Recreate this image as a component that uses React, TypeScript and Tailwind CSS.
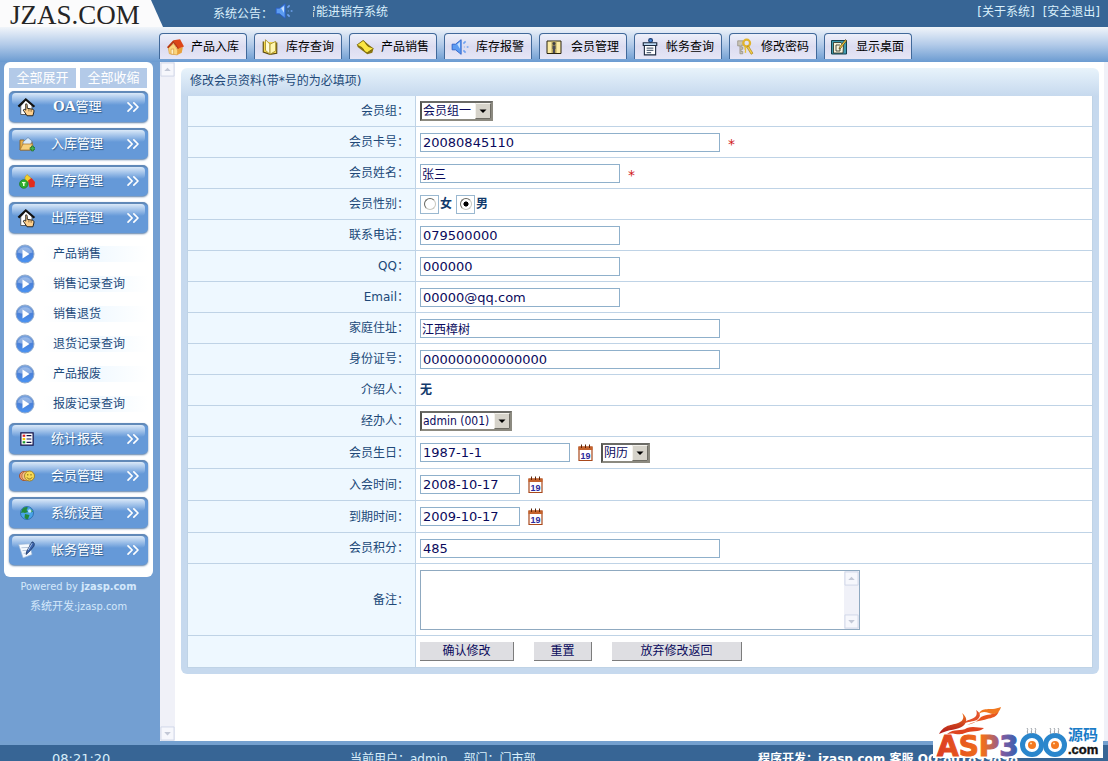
import type { ReactNode } from "react";
import { ChevronsRight } from "lucide-react";

/* ── Icons, all on a 16px grid ── */
function Svg({ children, size = "size-4" }: { children: ReactNode; size?: string }) {
  return (
    <svg viewBox="0 0 16 16" className={`${size} shrink-0`} fill="none" aria-hidden="true">
      {children}
    </svg>
  );
}

const HomeIcon = () => (
  <Svg size="size-[18px]">
    <path d="M2 8.5 7 5l4 7-1 3-7-1z" fill="#fbd67e" stroke="#d99a3a" strokeWidth=".6" />
    <path d="M10 9l5-1-1 5-4 2z" fill="#e9a13b" />
    <path d="M6.5 2 12.500 1l3.500 6.500-5.500 2z" fill="#dd4518" />
    <path d="M6.500 2 .8 8.200l1.400.8L6.600 4.500l4 5.200.8-.6z" fill="#b8380f" />
    <path d="M4.500 14.300V10l2.300-.3v4.900z" fill="#fff2c4" stroke="#d08a2a" strokeWidth=".5" />
  </Svg>
);

const BookIcon = () => (
  <Svg size="size-[18px]">
    <path d="M2 3v9.500l6 2 6-1V4" fill="#f5d84a" stroke="#5b4a10" />
    <path d="M8 14.500V5.500L4 1.500v9.500z" fill="#fffbd8" stroke="#a8912a" strokeWidth=".8" />
    <path d="M8 5.500 13 3v8.500l-5 3z" fill="#fff7b0" stroke="#a8912a" strokeWidth=".8" />
  </Svg>
);

const NoteIcon = () => (
  <Svg size="size-[18px]">
    <path d="M1 6.500 6.500 2l9 7.500-1 3.500-4.500 1.500L1.500 8z" fill="#8a7410" />
    <path d="M1 6 6 2.500c2-.5 2.500 3.500 5 5 1.500.8 3.500.5 4.300 2L10 13c-2.500.2-3-3.200-5-4.700C3.500 7.200 2 7.500 1 6z" fill="#fbe742" stroke="#6b5a08" strokeWidth=".7" />
  </Svg>
);

const SpeakerIcon = () => (
  <Svg size="size-[18px]">
    <path d="M1 5.500h3L9 1.500v13L4 10.500H1z" fill="#5c9cf2" stroke="#2a5fc8" strokeWidth=".8" />
    <path d="M5.500 5.500 8 3.500v6z" fill="#c4e0ff" />
    <path d="m11 5 2-2M11.500 8H12m2 0h1.500M11 11l2 2" stroke="#6fa2f0" strokeWidth="1.400" />
  </Svg>
);

const MemberIcon = () => (
  <Svg>
    <path d="M1 2h14v12.500H1z" fill="#fbeaa4" stroke="#2b2410" />
    <path d="M5.500 2.500h5V14h-5z" fill="#b5a35c" />
    <circle cx="8" cy="4.500" r="1.500" fill="#3c3c44" />
    <path d="M6.500 6.500h3V10H9v4H7v-4h-.5z" fill="#4a4a54" />
  </Svg>
);

const BillIcon = () => (
  <Svg size="size-[18px]">
    <circle cx="8.500" cy="2.200" r="1.700" fill="#4a8be0" stroke="#173a70" />
    <path d="M3 5.500h10V15H3z" fill="#fff" stroke="#1d2a40" />
    <path d="M2 4.200h12v2.500H2z" fill="#bcd8f2" stroke="#1d2a40" />
    <path d="M5 9h6M5 11h6M5 13h4" stroke="#59687c" strokeWidth=".9" />
  </Svg>
);

const KeyIcon = () => (
  <Svg size="size-[18px]">
    <path d="M1.500 2.500h5v4h-2V8h1.500v2H4.500v2H6v2H3.500V7h-2z" fill="#c9c3b4" stroke="#8e8777" strokeWidth=".6" />
    <circle cx="9.500" cy="4.500" r="3" stroke="#e0b32c" strokeWidth="2" />
    <path d="m11 7 4 6.500-1.500 1L9.500 8z" fill="#f5d043" stroke="#a87d12" strokeWidth=".6" />
    <path d="M9 8v5.500l-1.500-.8.6-1.400-.6-1V8z" fill="#e9c136" />
  </Svg>
);

const DesktopIcon = () => (
  <Svg>
    <path d="M.5 1.500h15v13.500H.5z" fill="#3f9bb0" stroke="#153f4f" />
    <path d="M2.500 3.500 10 3.500l2.500 3-.5 7.500H2.500z" fill="#f7f4dc" stroke="#2a2a1c" strokeWidth=".8" />
    <path d="M9 6H5v6h4V9" stroke="#3b3b30" strokeWidth=".9" />
    <path d="m14.500.5 1 1.500-6 7.500-1.500.5.5-2z" fill="#f2c53c" stroke="#3a2d08" strokeWidth=".6" />
  </Svg>
);

const HouseHandIcon = () => (
  <Svg size="size-5">
    <path d="M3 7v7h9V6L7 2.500z" fill="#fff" stroke="#3a3a3a" strokeWidth=".6" />
    <path d="M.5 7 7 .8l7.500 6.400-1.200 1.200L7 3 1.800 8.300z" fill="#111" />
    <path d="M7 5.500c1.200 0 1.200.6 1.200 1.200V9l4.300.8c1 .3 1.200 1 1 2.200l-.8 3H8l-3-4.500.7-.8 1.300.8z" fill="#ffd08c" stroke="#111" strokeWidth=".7" />
    <path d="M9.500 9.500v2M11.300 9.800v2" stroke="#6b4a1c" strokeWidth=".6" />
  </Svg>
);

const FolderPlusIcon = () => (
  <Svg>
    <path d="M1 4h4l1 1.500h7V14H1z" fill="#e8b04a" stroke="#8a5a18" strokeWidth=".8" />
    <path d="m4 6 5-4.500L13 5l-2 5H4z" fill="#dcebfa" stroke="#5c7fa8" strokeWidth=".7" />
    <path d="m1 14 3-6h10l-3 6z" fill="#f7cf7c" stroke="#a4702a" strokeWidth=".7" />
    <path d="M11 11.500h1.500V10h2v1.500H16v2h-1.500V15h-2v-1.500H11z" fill="#43b04a" stroke="#1d6b26" strokeWidth=".6" />
  </Svg>
);

const BlocksIcon = () => (
  <Svg>
    <path d="M8 1.500 12 5v4H6V4z" fill="#f4d02c" stroke="#b8890c" strokeWidth=".5" />
    <path d="M9 7.500 12.500 5 16 9l-.5 5-5 .5z" fill="#e22b1c" />
    <circle cx="4.800" cy="11" r="4.300" fill="#2fae2f" stroke="#157018" strokeWidth=".6" />
    <path d="M3 9h3.500v1.200H5.500V13H4v-2.800H3z" fill="#eaffd8" />
  </Svg>
);

const ReportIcon = () => (
  <Svg size="size-3.5">
    <path d="M1 1h14v14H1z" fill="#fff" stroke="#12124a" strokeWidth="1.400" />
    <path d="M3 3h3v2.500H3z" fill="#e02020" />
    <path d="M3 6.800h3v2.500H3z" fill="#f2c800" />
    <path d="M3 10.500h3V13H3z" fill="#1a9a2c" />
    <path d="M7.500 4.200H13M7.500 8H13m-5.500 3.800H13" stroke="#12124a" strokeWidth="1.300" />
  </Svg>
);

const FacesIcon = () => (
  <Svg>
    <circle cx="5" cy="8" r="4.500" fill="#f2a078" stroke="#a04a22" strokeWidth=".9" />
    <circle cx="7.500" cy="8" r="4.700" fill="#f5c08a" stroke="#a0602a" strokeWidth=".7" />
    <circle cx="10.500" cy="8" r="5" fill="#f7da54" stroke="#94741a" strokeWidth=".8" />
    <path d="M8.800 6v1.500M12 6v1.500M8 9.500c1 2 4 2 5 0" stroke="#75580e" strokeWidth=".9" />
  </Svg>
);

const GlobeIcon = () => (
  <Svg>
    <circle cx="8" cy="8" r="6.500" fill="#4aa4e8" stroke="#2264a8" strokeWidth=".8" />
    <path d="M3 4.500C5 1.500 8 1.500 9 2.500L7.500 5 9 7l-3 1-2-.5-2 .5zM6 9l4.500 1-1.500 4.200c-2 .3-3.500-1-3.500-2zM11.500 3.500l2.500 3-2 1z" fill="#23883c" />
    <circle cx="10.800" cy="6" r="1.800" fill="#d8f4ff" opacity=".85" />
  </Svg>
);

const PenIcon = () => (
  <Svg size="size-[18px]">
    <path d="m.5 3 9.500-.5L12.500 12l-8 3z" fill="#f6faff" stroke="#9ab4d4" strokeWidth=".6" />
    <path d="m3 6 6-.3M4 8.500l5-.3M5 11l3-.5" stroke="#a4b8d0" strokeWidth=".7" />
    <path d="M12.500.8c2 .2 2.500 2 1.500 4L9.500 10l-2.300 2 .6-3z" fill="#3c64ac" stroke="#16305e" strokeWidth=".7" />
    <path d="m12.500 2-3.500 6" stroke="#b8d0f4" strokeWidth=".8" />
  </Svg>
);

const PlayIcon = () => (
  <svg viewBox="0 0 20 20" className="size-5 shrink-0" aria-hidden="true">
    <defs>
      <linearGradient id="play" x1="0" y1="0" x2="0" y2="1">
        <stop offset="0" stopColor="#7fa8e0" />
        <stop offset=".5" stopColor="#4a80d8" />
        <stop offset="1" stopColor="#4b95f5" />
      </linearGradient>
    </defs>
    <circle cx="10" cy="10" r="9" fill="url(#play)" stroke="#8fa9cc" />
    <path d="M2.500 8.500a8 8 0 0 1 15 0Q10 11 2.500 8.500z" fill="#fff" opacity=".3" />
    <path d="M7.500 5.500v9l7-4.500z" fill="#fff" />
  </svg>
);

const CalendarIcon = () => (
  <svg viewBox="0 0 15 18" className="h-[18px] w-[15px]" aria-hidden="true">
    <path d="M1 3h13v13.500H1z" fill="#fff" stroke="#a8481c" strokeWidth="1.200" />
    <path d="M.5 2.500h14V6H.5z" fill="#c4622c" />
    <path d="M3.500.5v3.500M7.500.5v3.500M11.500.5v3.500" stroke="#5c2408" />
    <text x="7.500" y="14.500" textAnchor="middle" fontSize="9" fontWeight="700" fill="#2a2a9c" fontFamily="Liberation Sans, sans-serif">
      19
    </text>
  </svg>
);

const tools = [
  { label: "产品入库", icon: HomeIcon },
  { label: "库存查询", icon: BookIcon },
  { label: "产品销售", icon: NoteIcon },
  { label: "库存报警", icon: SpeakerIcon },
  { label: "会员管理", icon: MemberIcon },
  { label: "帐务查询", icon: BillIcon },
  { label: "修改密码", icon: KeyIcon },
  { label: "显示桌面", icon: DesktopIcon },
];

const menus = [
  { label: "OA管理", icon: HouseHandIcon, items: [] },
  { label: "入库管理", icon: FolderPlusIcon, items: [] },
  { label: "库存管理", icon: BlocksIcon, items: [] },
  {
    label: "出库管理",
    icon: HouseHandIcon,
    items: ["产品销售", "销售记录查询", "销售退货", "退货记录查询", "产品报废", "报废记录查询"],
  },
  { label: "统计报表", icon: ReportIcon, items: [] },
  { label: "会员管理", icon: FacesIcon, items: [] },
  { label: "系统设置", icon: GlobeIcon, items: [] },
  { label: "帐务管理", icon: PenIcon, items: [] },
];

/* ── Top ── */
function Header() {
  return (
    <header className="shrink-0">
      <div className="flex h-[27px] bg-[#376595] text-[#d9effb]">
        <div className="relative w-[163px] shrink-0">
          <svg viewBox="0 0 163 27" className="absolute inset-0" aria-hidden="true">
            <path d="M0 0h151l12 27H0z" fill="#fbfbfc" />
          </svg>
          <h1 className="relative pl-2.5 font-['Liberation_Serif',serif] text-[27px] leading-[30px] text-[#252525]">
            JZAS.COM
          </h1>
        </div>
        <p className="ml-[50px] pt-1 leading-5">系统公告：</p>
        <div className="mt-0.5 ml-0.5">
          <SpeakerIcon />
        </div>
        <p className="ml-5 flex w-[75px] justify-end overflow-hidden pt-0.5 leading-5 whitespace-nowrap">
          智能进销存系统
        </p>
        <nav className="ml-auto flex gap-2 pt-0.5 pr-2 leading-5">
          <a href="#about">[关于系统]</a>
          <a href="#exit">[安全退出]</a>
        </nav>
      </div>
      <div className="flex h-[35px] gap-[7px] bg-linear-to-b from-[#f1f5fa] via-[#b3cbe9] to-[#6b9bd1] pt-1.5 pl-[159px]">
        {tools.map(({ label, icon: Icon }) => (
          <button
            key={label}
            className="flex h-[26px] w-[88px] shrink-0 items-center rounded-t border border-b-0 border-[#41699a] bg-linear-to-b from-[#edf0fa] via-[#dcdcf0] to-[#e6e6f6] pl-1.5 text-black"
          >
            <span className="flex w-[25px]">
              <Icon />
            </span>
            {label}
          </button>
        ))}
      </div>
    </header>
  );
}

/* ── Left menu ── */
function Sidebar() {
  return (
    <aside className="w-40 shrink-0 bg-[#739fd2] pl-1">
      <div className="w-[149px] rounded-md bg-white px-[5px] pt-1.5 pb-3">
        <div className="mb-[3px] flex gap-1 text-[13px] text-white [text-shadow:1px_1px_1px_#7d9dc4]">
          <button className="h-5 w-[67px] bg-[#b3cae8]">全部展开</button>
          <button className="h-5 w-[67px] bg-[#b3cae8]">全部收缩</button>
        </div>
        <ul className="flex flex-col gap-1.5">
          {menus.map(({ label, icon: Icon, items }) => (
            <li key={label}>
              <button className="relative flex h-[31px] w-full items-center rounded-[5px] border-t-2 border-[#6189b8] bg-[#6599d8] pb-0.5 pl-2 text-[13px] text-white shadow-[0_1px_2px_#5c7fa8] [text-shadow:1px_1px_1px_#33608f] before:absolute before:inset-x-[3px] before:top-0 before:h-3 before:rounded-[4px] before:bg-linear-to-b before:from-[#dbe9f8] before:to-[#6599d8]">
                <span className="relative flex w-[34px]">
                  <span className="flex w-5 justify-center">
                    <Icon />
                  </span>
                </span>
                <span className="relative">
                  {label.startsWith("OA") ? (
                    <>
                      <span className="pl-0.5 font-['Liberation_Serif',serif] text-[15px] font-bold">OA</span>
                      {label.slice(2)}
                    </>
                  ) : (
                    label
                  )}
                </span>
                <ChevronsRight size={20} strokeWidth={2} className="relative mr-[5px] ml-auto" />
              </button>
              {items.length > 0 && (
                <ul className="-mb-0.5 pt-1.5 text-[#1d4a7c]">
                  {items.map((item) => (
                    <li key={item}>
                      <a href={`#${item}`} className="flex h-[30px] items-center pl-1.5">
                        <PlayIcon />
                        <span className="ml-2 flex-1 bg-linear-to-r from-white via-[#f1f9ff] to-white pl-2.5">{item}</span>
                      </a>
                    </li>
                  ))}
                </ul>
              )}
            </li>
          ))}
        </ul>
      </div>
      <div className="w-[149px] text-center font-['DejaVu_Sans_Condensed','Noto_Sans_CJK_SC',sans-serif] text-[11px] leading-5 text-[#d3e8fb]">
        <p>
          Powered by <b>jzasp.com</b>
        </p>
        <p>系统开发:jzasp.com</p>
      </div>
    </aside>
  );
}

/* ── Disabled scrollbar ── */
function ScrollTrack() {
  return (
    <div className="flex w-[15px] shrink-0 flex-col justify-between bg-[#f0f1f8]" aria-hidden="true">
      <ScrollEnd d="M4.500 9.500 8 6l3.500 3.500z" />
      <ScrollEnd d="M4.500 6.500 8 10l3.500-3.500z" />
    </div>
  );
}

function ScrollEnd({ d }: { d: string }) {
  return (
    <svg viewBox="0 0 16 16" className="w-full">
      <path d="M1 1h14v14H1z" fill="#f6f7fc" stroke="#cfd6e8" />
      <path d={d} fill="#c3c8d6" />
    </svg>
  );
}

/* ── Form pieces ── */
function Row({ label, id, height = "min-h-[31px]", children }: { label?: string; id?: string; height?: string; children: ReactNode }) {
  return (
    <div className={`flex border-b border-[#bfd3e6] last:border-b-0 ${height}`}>
      <div className="flex w-[228px] shrink-0 items-center justify-end border-r border-[#bfd3e6] bg-[#eef8ff] pr-1.5">
        {label && <label htmlFor={id}>{label}：</label>}
      </div>
      <div className="flex flex-1 items-center pl-1">{children}</div>
    </div>
  );
}

function TextInput({ id, value, width, cjk }: { id: string; value: string; width: string; cjk?: boolean }) {
  return (
    <input
      id={id}
      type="text"
      defaultValue={value}
      className={`h-[19px] border border-[#8fb0cb] bg-white text-[#0a0a5c] ${width} ${cjk ? "px-px text-xs" : "px-0.5 text-[13px]"}`}
    />
  );
}

function Select({ id, value, width, label }: { id: string; value: string; width: string; label?: string }) {
  return (
    <span className={`relative flex ${width}`}>
      <select
        id={id}
        aria-label={label}
        className="h-5 w-full appearance-none border-2 border-t-[#6b6b66] border-r-[#8c8a80] border-b-[#8c8a80] border-l-[#55554f] bg-white pl-px font-['DejaVu_Sans_Condensed','Noto_Sans_CJK_SC',sans-serif] leading-4 text-[#0a0a5c]"
      >
        <option>{value}</option>
      </select>
      <svg viewBox="0 0 16 16" className="pointer-events-none absolute top-0.5 right-0.5 size-4" aria-hidden="true">
        <path d="M0 0h16v16H0z" fill="#d6d3ca" />
        <path d="M.5 15.500V.5h15" stroke="#f4f2ec" fill="none" />
        <path d="M.5 15.500h15V.5" stroke="#6e6c64" fill="none" />
        <path d="M4.500 6.500h7L8 10z" fill="#000" />
      </svg>
    </span>
  );
}

function Sex({ value, checked }: { value: string; checked?: boolean }) {
  return (
    <label className="mr-1 flex items-center font-bold text-[#123a6c]">
      <span className="mr-px flex size-[19px] items-center justify-center border border-[#9ab8d0]">
        <input
          type="radio"
          name="sex"
          defaultChecked={checked}
          className="size-3 appearance-none rounded-full border border-t-[#66665f] border-r-[#c8c8c0] border-b-[#c8c8c0] border-l-[#66665f] bg-white checked:bg-radial checked:from-black checked:from-30% checked:to-white checked:to-40%"
        />
      </span>
      {value}
    </label>
  );
}

function DateButton() {
  return (
    <button type="button" aria-label="选择日期" className="ml-2">
      <CalendarIcon />
    </button>
  );
}

const Star = () => <span className="ml-2 pt-1 text-sm leading-4 text-[#d01818]">*</span>;

const actionClass = "h-[19px] border-r border-b border-[#7c7c7c] bg-[#dedee2] text-[#0a0a5c]";

function MemberForm() {
  return (
    <form className="rounded-md bg-linear-to-b from-[#e8f3fb] via-[#c6d9ee] via-[28px] to-[#c6d9ee] px-1.5 pb-1.5 text-[#204878]">
      <h2 className="h-7 pl-[3px] leading-[26px]">修改会员资料(带*号的为必填项)</h2>
      <div className="border border-[#bfd3e6] border-t-0 bg-white">
        <Row label="会员组" id="group">
          <Select id="group" value="会员组一" width="w-[73px]" />
        </Row>
        <Row label="会员卡号" id="card">
          <TextInput id="card" value="20080845110" width="w-[300px]" />
          <Star />
        </Row>
        <Row label="会员姓名" id="name">
          <TextInput id="name" value="张三" width="w-[200px]" cjk />
          <Star />
        </Row>
        <Row label="会员性别">
          <Sex value="女" />
          <Sex value="男" checked />
        </Row>
        <Row label="联系电话" id="phone">
          <TextInput id="phone" value="079500000" width="w-[200px]" />
        </Row>
        <Row label="QQ" id="qq">
          <TextInput id="qq" value="000000" width="w-[200px]" />
        </Row>
        <Row label="Email" id="email">
          <TextInput id="email" value="00000@qq.com" width="w-[200px]" />
        </Row>
        <Row label="家庭住址" id="address">
          <TextInput id="address" value="江西樟树" width="w-[300px]" cjk />
        </Row>
        <Row label="身份证号" id="idcard">
          <TextInput id="idcard" value="000000000000000" width="w-[300px]" />
        </Row>
        <Row label="介绍人">
          <b className="text-[#123a6c]">无</b>
        </Row>
        <Row label="经办人" id="handler">
          <Select id="handler" value="admin (001)" width="w-[92px]" />
        </Row>
        <Row label="会员生日" id="birthday" height="min-h-8">
          <TextInput id="birthday" value="1987-1-1" width="w-[150px]" />
          <DateButton />
          <span className="ml-2">
            <Select id="calendar" value="阴历" width="w-[49px]" label="历法" />
          </span>
        </Row>
        <Row label="入会时间" id="joined" height="min-h-8">
          <TextInput id="joined" value="2008-10-17" width="w-[100px]" />
          <DateButton />
        </Row>
        <Row label="到期时间" id="expires" height="min-h-8">
          <TextInput id="expires" value="2009-10-17" width="w-[100px]" />
          <DateButton />
        </Row>
        <Row label="会员积分" id="points">
          <TextInput id="points" value="485" width="w-[300px]" />
        </Row>
        <Row label="备注" id="remark" height="min-h-[72px]">
          <div className="flex h-[60px] w-[440px] border border-[#8fa9c0]">
            <textarea id="remark" className="flex-1 resize-none" />
            <ScrollTrack />
          </div>
        </Row>
        <Row>
          <div className="flex gap-5">
            <button type="submit" className={`w-[94px] ${actionClass}`}>
              确认修改
            </button>
            <button type="reset" className={`w-[58px] ${actionClass}`}>
              重置
            </button>
            <button type="button" className={`w-[130px] ${actionClass}`}>
              放弃修改返回
            </button>
          </div>
        </Row>
      </div>
    </form>
  );
}

/* ── Badge in the bottom corner ── */
function SiteBadge() {
  return (
    <svg viewBox="0 0 170 52" className="absolute right-[5px] bottom-[3px] h-[52px] w-[170px]" role="img" aria-label="ASP300源码.com">
      <defs>
        <linearGradient id="fire" gradientUnits="userSpaceOnUse" x1="0" y1="6" x2="0" y2="50">
          <stop offset="0" stopColor="#f47a20" />
          <stop offset=".45" stopColor="#b5201c" />
          <stop offset="1" stopColor="#f58220" />
        </linearGradient>
        <linearGradient id="asp" gradientUnits="userSpaceOnUse" x1="4" y1="0" x2="88" y2="0">
          <stop offset="0" stopColor="#dc3c22" />
          <stop offset=".55" stopColor="#f0701c" />
          <stop offset=".76" stopColor="#8b5a9c" />
          <stop offset="1" stopColor="#1f63b8" />
        </linearGradient>
      </defs>
      <path d="M0 0h170v52H0z" fill="#fff" />
      <path d="M6 28C12 17 20 20 27 16c4-2 4-6 2-9 5 4 6 9 1 13-5 4-14 3-24 8z" fill="url(#fire)" />
      <path d="M30 18c3-5 10-4 13-8 1-2 1-4 0-6 5 3 5 7 1 10-4 2-9 1-14 4z" fill="#e2502a" />
      <path d="M34 19c8-2 10-4 14-8 6-3 13-2 18-6-2 6-7 7-12 8-6 2-12 2-20 6z" fill="#e8561f" />
      <path d="M45 9C50-1 56 6 68 1c-2 7-7 8-12 6-4-1-7-2-11 2z" fill="#f07820" />
      <path d="M14 28c7-6 14-2 20-6 6-2 12 0 17 0-5 5-13 2-19 5-6 3-12-1-18 1z" fill="#df4420" />
      <text x="4" y="50" fontSize="28" fontWeight="700" fontFamily="DejaVu Sans, sans-serif" fill="url(#asp)" stroke="url(#asp)">
        ASP3
      </text>
      <circle cx="99" cy="39" r="9.500" fill="#fff" stroke="#2a86cc" strokeWidth="5" />
      <circle cx="122" cy="39" r="9.500" fill="#fff" stroke="#2a86cc" strokeWidth="5" />
      <circle cx="99" cy="39" r="4" fill="#f47a20" />
      <circle cx="122" cy="39" r="4" fill="#f47a20" />
      <path d="M97 37.500h2M120 37.500h2" stroke="#ffd9a8" strokeWidth="1.500" />
      <path d="M94 22c2 2-1 3 1 6m3-6c2 2-1 3 1 6m3-6c2 2-1 3 1 6M117 22c2 2-1 3 1 6m3-6c2 2-1 3 1 6m3-6c2 2-1 3 1 6" stroke="#8d949c" strokeWidth=".9" fill="none" />
      <text x="135" y="34" fontSize="15" fontWeight="700" fontFamily="Noto Sans CJK SC, sans-serif" fill="#1a7cc8">
        源码
      </text>
      <text x="135" y="48" fontSize="13" fontWeight="700" fontFamily="Liberation Sans, sans-serif" fill="#111" stroke="#111" strokeWidth=".4">
        .com
      </text>
    </svg>
  );
}

export default function App() {
  return (
    <div
      lang="zh-CN"
      className="relative flex h-screen flex-col overflow-hidden bg-white font-['DejaVu_Sans','Noto_Sans_CJK_SC',sans-serif] text-xs"
    >
      <Header />
      <div className="flex min-h-0 flex-1">
        <Sidebar />
        <ScrollTrack />
        <main className="min-w-0 flex-1 pt-1.5 pr-[5px] pl-1.5">
          <MemberForm />
        </main>
        <div className="w-1 shrink-0 bg-[#f0f1f8]" />
      </div>
      <footer className="flex h-5 shrink-0 overflow-hidden border-t-4 border-[#74a0cf] bg-[#376595] pt-1 pl-[52px] whitespace-nowrap text-[#d9effb]">
        <time className="w-[298px] text-[13px] leading-5">08:21:20</time>
        <p className="flex flex-1 gap-4 leading-5">
          <span>当前用户：admin</span>
          <span>部门：门市部</span>
        </p>
        <p className="w-[350px] leading-5 font-bold text-white">程序开发：jzasp.com 客服 QQ:801899898</p>
      </footer>
      <SiteBadge />
    </div>
  );
}
